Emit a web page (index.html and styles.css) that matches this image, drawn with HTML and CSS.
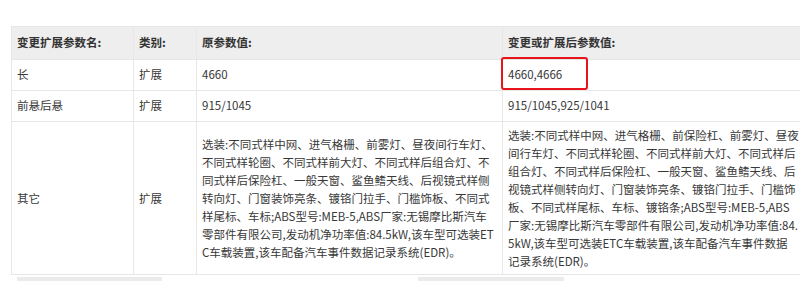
FILE: index.html
```html
<!DOCTYPE html>
<html lang="zh-CN">
<head>
<meta charset="utf-8">
<title>变更扩展参数</title>
<link rel="stylesheet" href="styles.css">
</head>
<body>
<div class="wrap">
  <table class="params">
    <colgroup>
      <col class="c1"><col class="c2"><col class="c3"><col class="c4">
    </colgroup>
    <thead>
      <tr>
        <th>变更扩展参数名:</th>
        <th>类别:</th>
        <th>原参数值:</th>
        <th>变更或扩展后参数值:</th>
      </tr>
    </thead>
    <tbody>
      <tr>
        <td>长</td>
        <td>扩展</td>
        <td>4660</td>
        <td class="mark-cell">4660,4666<span class="mark"></span></td>
      </tr>
      <tr>
        <td>前悬后悬</td>
        <td>扩展</td>
        <td>915/1045</td>
        <td>915/1045,925/1041</td>
      </tr>
      <tr class="tall">
        <td>其它</td>
        <td>扩展</td>
        <td class="long">选装:不同式样中网、进气格栅、前雾灯、昼夜间行车灯、<br>不同式样轮圈、不同式样前大灯、不同式样后组合灯、不<br>同式样后保险杠、一般天窗、鲨鱼鳍天线、后视镜式样侧<br>转向灯、门窗装饰亮条、镀铬门拉手、门槛饰板、不同式<br>样尾标、车标;ABS型号:MEB-5,ABS厂家:无锡摩比斯汽车<br>零部件有限公司,发动机净功率值:84.5kW,该车型可选装ET<br>C车载装置,该车配备汽车事件数据记录系统(EDR)。</td>
        <td class="long">选装:不同式样中网、进气格栅、前保险杠、前雾灯、昼夜<br>间行车灯、不同式样轮圈、不同式样前大灯、不同式样后<br>组合灯、不同式样后保险杠、一般天窗、鲨鱼鳍天线、后<br>视镜式样侧转向灯、门窗装饰亮条、镀铬门拉手、门槛饰<br>板、不同式样尾标、车标、镀铬条;ABS型号:MEB-5,ABS<br>厂家:无锡摩比斯汽车零部件有限公司,发动机净功率值:84.<br>5kW,该车型可选装ETC车载装置,该车配备汽车事件数据<br>记录系统(EDR)。</td>
      </tr>
    </tbody>
  </table>
  <div class="scrollbars">
    <span class="thumb thumb-a"></span>
    <span class="thumb thumb-b"></span>
  </div>
</div>
</body>
</html>
```

FILE: styles.css
```css
html, body {
  margin: 0;
  padding: 0;
  background: #ffffff;
  overflow: hidden;
}

body {
  font-family: "Noto Sans CJK SC", "Noto Sans", sans-serif;
  font-size: 11.5px;
  color: #383838;
  width: 800px;
  height: 281px;
}

.wrap {
  padding: 26px 0 0 11px;
  width: 820px;
}

.params {
  border-collapse: collapse;
  table-layout: fixed;
  width: 797px;
}

.c1 { width: 122px; }
.c2 { width: 63px; }
.c3 { width: 306px; }
.c4 { width: 306px; }

.params th,
.params td {
  border: 1px solid #e7e7e7;
  text-align: left;
  vertical-align: middle;
  line-height: 17.8px;
  padding: 6px 5px 6px 5px;
  white-space: nowrap;
  overflow: visible;
}

.params th {
  background: #eeeeee;
  font-weight: bold;
  color: #333333;
  padding-top: 7px;
  padding-bottom: 7px;
}

.params tbody tr:not(.tall) td {
  height: 18px;
}

.params .tall td {
  line-height: 18px;
  padding-top: 4px;
  padding-bottom: 4px;
}

.mark-cell {
  position: relative;
}

.mark {
  position: absolute;
  left: -2px;
  top: -3px;
  width: 83px;
  height: 29px;
  border: 2px solid #e8141b;
  border-radius: 3px;
}

.scrollbars {
  display: flex;
  margin-top: 2px;
  margin-left: 6px;
  height: 6px;
}

.thumb {
  display: block;
  height: 6px;
  background: #ebebeb;
}

.thumb-a {
  width: 145px;
}

.thumb-b {
  width: 146px;
  margin-left: 256px;
}
```
